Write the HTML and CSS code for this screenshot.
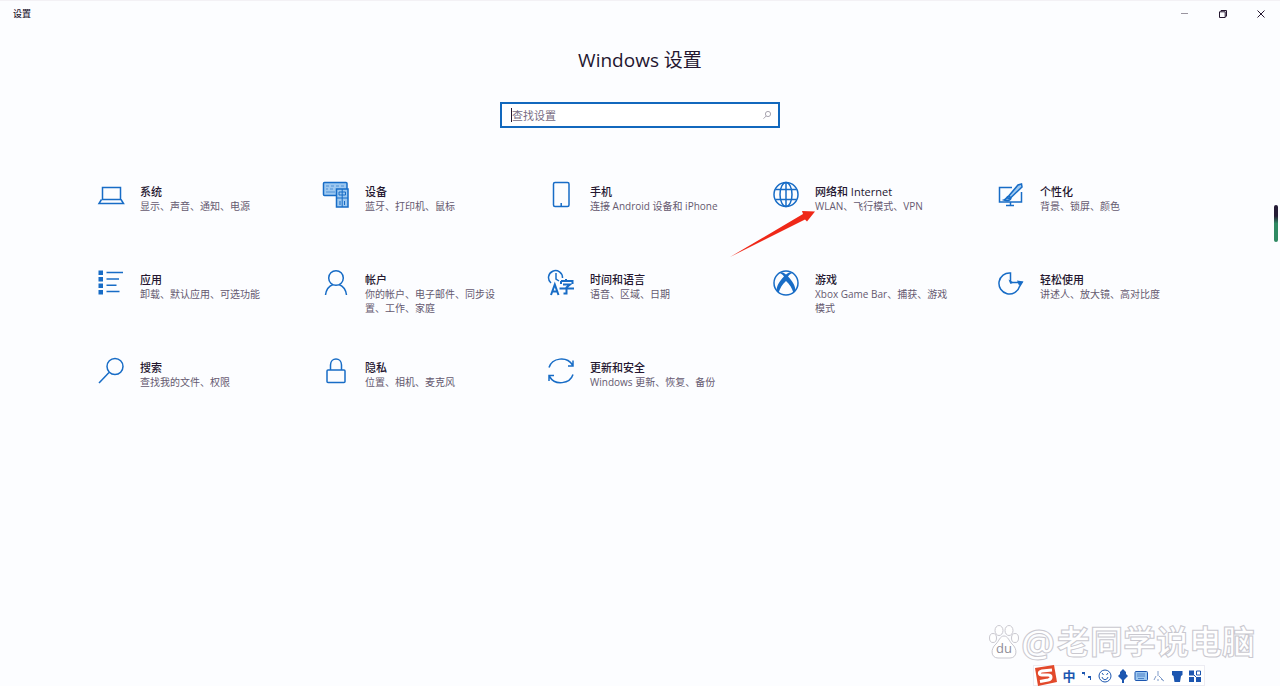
FILE: index.html
```html
<!DOCTYPE html>
<html lang="zh-CN">
<head>
  <meta charset="UTF-8">
  <meta name="viewport" content="width=device-width, initial-scale=1.0">
  <title>设置</title>
  <link rel="stylesheet" href="styles.css">
</head>
<body>

<header class="titlebar">
  <span class="app-name">设置</span>
  <div class="window-buttons">
    <button type="button" aria-label="最小化"><svg width="10" height="10" viewBox="0 0 10 10"><path d="M1 4.500h7" stroke="#99949f"/></svg></button>
    <button type="button" aria-label="还原"><svg width="10" height="10" viewBox="0 0 10 10"><path d="M1.500 2.800h5.700v5.700H1.500zM3 2.500v-1h5.500v5.700H7.300"/></svg></button>
    <button type="button" aria-label="关闭"><svg width="10" height="10" viewBox="0 0 10 10"><path d="M1.500 1.500l7 7M8.500 1.500l-7 7"/></svg></button>
  </div>
</header>

<main>
  <h1>Windows 设置</h1>

  <form class="search">
    <span class="caret"></span>
    <input type="text" placeholder="查找设置" aria-label="查找设置">
    <button type="button" aria-label="搜索"><svg width="10" height="10" viewBox="0 0 10 10"><circle cx="6" cy="4" r="2.600"/><path d="M4.200 6L1.500 8.700"/></svg></button>
  </form>

  <nav class="tiles">
    <a class="tile" href="#system">
      <svg class="icon" viewBox="0 0 28 28"><path d="M5.500 6.500h18v12h-18zM4.500 18.500L2 22.500h24.500L24 18.500"/></svg>
      <div class="text"><h2>系统</h2><p>显示、声音、通知、电源</p></div>
    </a>
    <a class="tile" href="#devices">
      <svg class="icon" viewBox="0 0 28 28"><rect class="light" x="1.500" y="1.500" width="23.500" height="13" rx="1"/><path d="M4 5h3m2 0h3m2 0h3m2 0h3M4 8h2m2 0h3M4 11h9" stroke-width=".6"/><path class="light" d="M14.500 8h11.500v18H14.500z"/><path d="M20.200 8v18M14.500 17H26M17 11h6.500v3H17zM18 20v4m4.500-4v4" stroke-width="1"/></svg>
      <div class="text"><h2>设备</h2><p>蓝牙、打印机、鼠标</p></div>
    </a>
    <a class="tile" href="#phone">
      <svg class="icon" viewBox="0 0 28 28"><rect x="6.500" y="1.500" width="15.500" height="24" rx="1.500"/><path d="M14.200 22v3"/></svg>
      <div class="text"><h2>手机</h2><p>连接 Android 设备和 iPhone</p></div>
    </a>
    <a class="tile" href="#network">
      <svg class="icon" viewBox="0 0 28 28"><circle cx="14" cy="13.500" r="12"/><ellipse cx="14" cy="13.500" rx="6" ry="12"/><path d="M14 1.500v24M3.500 8.500h21M3.500 18.500h21"/></svg>
      <div class="text"><h2>网络和 Internet</h2><p>WLAN、飞行模式、VPN</p></div>
      <svg class="arrow" width="88" height="50" viewBox="0 0 88 50"><path d="M1 48L74 5l-1-3 13 .5-8 10-2-2z"/></svg>
    </a>
    <a class="tile" href="#personalization">
      <svg class="icon" viewBox="0 0 28 28"><path d="M15 6.500H2.500v14.500h22V11M13.500 21v4M9 24.500h8"/><path class="light" d="M10 17l11-13 3.500-1 .5 3-12 11.500zM12 15l2 2c-1 3-4 3-7 2 3-1 2-3 5-4z"/></svg>
      <div class="text"><h2>个性化</h2><p>背景、锁屏、颜色</p></div>
    </a>

    <a class="tile" href="#apps">
      <svg class="icon" viewBox="0 0 28 28"><path class="fill" d="M1.500 1.500h4.500v4.500H1.500zM1.500 8h4.500v4.500H1.500zM1.500 14.500h4.500v4.500H1.500zM1.500 21h4.500v4.500H1.500z"/><path d="M9.500 3.500H26M9.500 10H22M9.500 16.200h10M9.500 22.500h13"/></svg>
      <div class="text"><h2>应用</h2><p>卸载、默认应用、可选功能</p></div>
    </a>
    <a class="tile" href="#accounts">
      <svg class="icon" viewBox="0 0 28 28"><circle cx="14" cy="9" r="7.300"/><path d="M3.500 26c.7-5.500 3.500-9 7.500-10.500M17 15.500c4 1.500 6.800 5 7.500 10.500"/></svg>
      <div class="text"><h2>帐户</h2><p>你的帐户、电子邮件、同步设置、工作、家庭</p></div>
    </a>
    <a class="tile" href="#time">
      <svg class="icon" viewBox="0 0 28 28"><path d="M4 14A7 7 0 1 1 15.500 9M9 4v6l3 2"/><path class="bold" d="M4 26l3.800-10.500L11.500 26M5.500 22.500h4.800M14 12h11.500v3M14 15v-3M19 10v2M16 15.500h7l-3.500 3v6h-3M12.500 19.500H27"/></svg>
      <div class="text"><h2>时间和语言</h2><p>语音、区域、日期</p></div>
    </a>
    <a class="tile" href="#gaming">
      <svg class="icon" viewBox="0 0 28 28"><circle cx="14" cy="14" r="12"/><path class="fill" d="M7 4c3-2 5 0 7 1.500C16 4 18 2 21 4c-1.500 0-3.500 1.500-5 3.500 4 4 7.500 9 7.500 14.500l-2 2c-1.500-5-4-9-7.500-12-3.500 3-6 7-7.500 12l-2-2c0-5.500 3.500-10.500 7.500-14.500C10.500 5.500 8.500 4 7 4z"/></svg>
      <div class="text"><h2>游戏</h2><p>Xbox Game Bar、捕获、游戏模式</p></div>
    </a>
    <a class="tile" href="#ease">
      <svg class="icon" viewBox="0 0 28 28"><path d="M13.500 13.500V4A10.500 10.500 0 1 0 22.500 17.500L25 13.500H13.500"/><path class="fill" d="M11.500 10.500l2 4.500 3-1.500zM20 11.500l6.500 1-4.500 4z"/></svg>
      <div class="text"><h2>轻松使用</h2><p>讲述人、放大镜、高对比度</p></div>
    </a>

    <a class="tile" href="#search">
      <svg class="icon" viewBox="0 0 28 28"><circle cx="18" cy="9.500" r="8"/><path d="M12 15.500L2 26"/></svg>
      <div class="text"><h2>搜索</h2><p>查找我的文件、权限</p></div>
    </a>
    <a class="tile" href="#privacy">
      <svg class="icon" viewBox="0 0 28 28"><rect x="5" y="13" width="18" height="12.500" rx="1"/><path d="M8.500 13V8c0-8 11-8 11 0v5"/></svg>
      <div class="text"><h2>隐私</h2><p>位置、相机、麦克风</p></div>
    </a>
    <a class="tile" href="#update">
      <svg class="icon" viewBox="0 0 28 28"><path d="M2 10.500C5 .5 20 -1 25.500 8M26 17.500C23 27 8 29 2.500 19.500M26 3.500v5.500h-5M2 24v-5.500h5"/></svg>
      <div class="text"><h2>更新和安全</h2><p>Windows 更新、恢复、备份</p></div>
    </a>
  </nav>
</main>

<div class="side-handle"></div>

<div class="watermark">
  <svg width="30" height="34" viewBox="0 0 30 34"><ellipse cx="4" cy="13" rx="3.500" ry="4.500"/><ellipse cx="10" cy="5.500" rx="4" ry="5"/><ellipse cx="20" cy="5.500" rx="4" ry="5"/><ellipse cx="26" cy="13" rx="3.500" ry="4.500"/><path d="M15 11c4 0 5 5 8 8 6 5 5 14-2 14H9c-7 0-8-9-2-14 3-3 4-8 8-8z"/><text x="15" y="28" text-anchor="middle">du</text></svg>
  <span class="at">@</span><span>老同学说电脑</span>
</div>

<div class="ime">
  <svg class="ime-logo" width="24" height="23" viewBox="0 0 24 23"><path class="red" d="M1 4L20 1l3 17-19 4z"/><path class="letter" d="M18 6L8 7c-4 1-3 4 0 4l6 0c4 0 4 4 0 5L6 17.500"/></svg>
  <button type="button">中</button>
  <button type="button" aria-label="标点"><svg width="14" height="14" viewBox="0 0 14 14"><path class="fill" d="M2 3h3v2L4 7V5H2zM8 7h3v4h-1V9H8z"/></svg></button>
  <button type="button" aria-label="表情"><svg width="14" height="14" viewBox="0 0 14 14"><circle cx="7" cy="7" r="6"/><path d="M4 4l1.500 2M10 4L8.500 6M4 8c1 3.500 5 3.500 6 0"/></svg></button>
  <button type="button" aria-label="语音"><svg width="14" height="14" viewBox="0 0 14 14"><path class="fill" d="M7 0l3 3v2l2 2-4 4v3H6v-3L2 7l2-2V3z"/></svg></button>
  <button type="button" aria-label="键盘"><svg width="14" height="14" viewBox="0 0 14 14"><rect class="light" x="1" y="2.500" width="12.500" height="9" rx="1"/><path d="M3 5h8M3 7h8M4 9.500h6" stroke-width=".6"/></svg></button>
  <button type="button" aria-label="手写"><svg width="14" height="14" viewBox="0 0 14 14"><path d="M6 2v5M4 7l-2 4M7 7l4 4M9 10l3 2M5 11h2" stroke="#7f9bc9"/></svg></button>
  <button type="button" aria-label="皮肤"><svg width="14" height="14" viewBox="0 0 14 14"><path class="fill" d="M2 2h10.500v4l-1.500 1-1 6H4.500l-1-6L2 6z"/></svg></button>
  <button type="button" aria-label="工具箱"><svg width="14" height="14" viewBox="0 0 14 14"><path class="fill" d="M1 1.500h5v5H1zM8 8h5v5H8zM1 8h5v5H1z"/><path d="M8.500 2h4v4h-4zM6 6l3 3"/></svg></button>
</div>

</body>
</html>
```

FILE: styles.css
```css
* {
  box-sizing: border-box;
}
body {
  margin: 0;
  min-height: 100vh;
  background: #fcfdff;
  color: #24162f;
  font-family: "Open Sans", "Noto Sans CJK SC", sans-serif;
  font-size: 10px;
  overflow: hidden;
}
h1, h2, p {
  margin: 0;
}
button {
  padding: 0;
  border: none;
  background: none;
  font-family: inherit;
  display: flex;
  align-items: center;
  justify-content: center;
}
svg {
  fill: none;
  stroke: #24162f;
  flex: none;
}

/* title bar */
.titlebar {
  display: flex;
  justify-content: space-between;
  height: 28px;
  border-top: 1px solid #f3f1f5;
}
.app-name {
  padding-left: 13px;
  font-size: 9px;
  font-weight: 500;
  line-height: 25px;
}
.window-buttons {
  display: flex;
}
.window-buttons button {
  width: 38px;
  height: 25px;
}

/* heading and search box */
h1 {
  margin-top: 18px;
  text-align: center;
  font-size: 19px;
  font-weight: 400;
  line-height: 28px;
}
.search {
  display: flex;
  align-items: center;
  width: 280px;
  height: 26px;
  margin: 28px auto 0;
  padding: 0 6px 0 9px;
  border: 2px solid #1268bd;
  background: #fff;
}
.caret {
  width: 1px;
  height: 14px;
  background: #24162f;
}
.search input {
  flex: 1;
  min-width: 0;
  padding: 0;
  border: none;
  outline: none;
  background: none;
  font-family: inherit;
  font-size: 11px;
}
.search input::placeholder {
  color: #786c82;
}
.search svg {
  stroke: #a9a5b0;
}

/* category tiles */
.tiles {
  display: grid;
  grid-template-columns: repeat(5, 1fr);
  grid-auto-rows: minmax(88px, auto);
  padding: 53px 58px 0 97px;
}
.tile {
  position: relative;
  display: flex;
  align-items: flex-start;
  gap: 15px;
  color: inherit;
  text-decoration: none;
}
.icon {
  width: 28px;
  height: 28px;
  stroke: #176cc6;
  stroke-width: 1.5;
}
.light {
  fill: #9dc8f0;
}
.icon .bold {
  stroke-width: 2;
}
.icon .fill {
  fill: #176cc6;
  stroke: none;
}
.text {
  width: 138px;
  padding-top: 3px;
}
.text h2 {
  font-size: 11px;
  font-weight: 500;
  line-height: 15px;
}
.text p {
  color: #65596f;
  line-height: 14px;
}
.arrow {
  position: absolute;
  left: -43px;
  top: 28px;
  fill: #ef2818;
  stroke: none;
}

/* things floating over the window */
.side-handle {
  position: absolute;
  right: 2px;
  top: 205px;
  width: 4px;
  height: 37px;
  border-radius: 2px;
  background: linear-gradient(#251c36 30%, #2f8a63 50%);
}
.watermark {
  position: absolute;
  right: 25px;
  bottom: 22px;
  display: flex;
  align-items: center;
  gap: 2px;
  color: #fff;
  font-size: 33px;
  font-weight: 700;
  line-height: 44px;
  -webkit-text-stroke: 1px #c9c8cf;
}
.watermark .at {
  font-size: 38px;
}
.watermark svg {
  fill: #fff;
  stroke: #c9c8cf;
}
.watermark text {
  fill: #8f8d98;
  stroke: none;
  font-size: 13px;
  font-weight: 400;
  -webkit-text-stroke: 0;
}
.ime {
  position: absolute;
  right: 75px;
  bottom: 0;
  display: flex;
  align-items: center;
  gap: 4px;
  height: 21px;
  padding-right: 2px;
  border: 1px solid #ececf3;
  background: #fff;
}
.ime button {
  width: 14px;
  height: 18px;
  color: #1c56b0;
  font-size: 13px;
  font-weight: 700;
}
.ime svg {
  stroke: #1c56b0;
}
.ime .fill {
  fill: #1c56b0;
  stroke: none;
}
.ime .red {
  fill: #e2492b;
  stroke: none;
}
.ime .letter {
  stroke: #fff;
  stroke-width: 3;
}
```
